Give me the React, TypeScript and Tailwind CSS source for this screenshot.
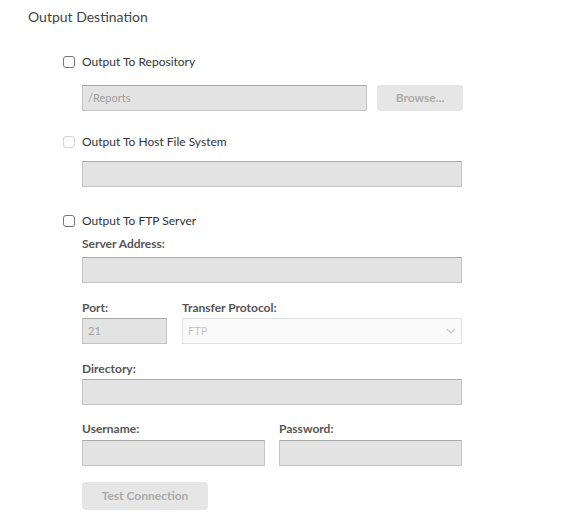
import React from "react";

const font = { fontFamily: "Lato, 'Liberation Sans', sans-serif" };

function Check({ label, disabled }: { label: string; disabled?: boolean }) {
  return (
    <label className="flex items-center h-[20px] ml-[35px] gap-[7px]">
      <span
        className={
          "w-[12px] h-[12px] rounded-[3px] border bg-white " +
          (disabled ? "border-[#d4d4d4]" : "border-[#767676]")
        }
      />
      <span className="text-[12px] text-[#333]">{label}</span>
    </label>
  );
}

function Field({ w, value }: { w: string; value?: string }) {
  return (
    <div
      className={
        w +
        " h-[26px] bg-[#e3e3e3] border border-[#c4c4c4] border-t-[#a9a9a9] flex items-center px-[5px] text-[11px] text-[#a0a0a0]"
      }
    >
      {value}
    </div>
  );
}

function Label({ children }: { children: React.ReactNode }) {
  return <div className="text-[12px] font-bold text-[#555] leading-[16px]">{children}</div>;
}

export default function App() {
  return (
    <div className="w-[562px] h-[524px] bg-white pl-[28px] pt-[7px]" style={font}>
      <div className="text-[14px] leading-[20px] text-[#444]">Output Destination</div>

      <div className="mt-[25px]">
        <Check label="Output To Repository" />
      </div>
      <div className="ml-[54px] mt-[13px] flex gap-[10px]">
        <Field w="w-[285px]" value="/Reports" />
        <button className="w-[86px] h-[26px] rounded-[3px] bg-[#e6e6e6] text-[12px] font-bold text-[#ababab]">
          Browse...
        </button>
      </div>

      <div className="mt-[21px]">
        <Check label="Output To Host File System" disabled />
      </div>
      <div className="ml-[54px] mt-[9px]">
        <Field w="w-[380px]" />
      </div>

      <div className="mt-[24px]">
        <Check label="Output To FTP Server" />
      </div>

      <div className="ml-[54px] w-[380px] flex flex-col">
        <div className="mt-[5px]">
          <Label>Server Address:</Label>
        </div>
        <div className="mt-[5px]">
          <Field w="w-[380px]" />
        </div>

        <div className="mt-[17px] flex gap-[15px]">
          <div className="flex flex-col w-[85px]">
            <Label>Port:</Label>
            <div className="mt-[2px]">
              <Field w="w-[85px]" value="21" />
            </div>
          </div>
          <div className="flex flex-col flex-1">
            <Label>Transfer Protocol:</Label>
            <div className="mt-[2px] h-[26px] border border-[#e2e2e2] bg-[#fafafa] flex items-center justify-between px-[5px] text-[11px] text-[#c8c8c8]">
              <span>FTP</span>
              <svg width="10" height="6" viewBox="0 0 10 6" fill="none">
                <path d="M1 1l4 4 4-4" stroke="#c8c8c8" strokeWidth="1.2" />
              </svg>
            </div>
          </div>
        </div>

        <div className="mt-[17px]">
          <Label>Directory:</Label>
        </div>
        <div className="mt-[2px]">
          <Field w="w-[380px]" />
        </div>

        <div className="mt-[16px] flex gap-[14px]">
          <div className="flex flex-col w-[183px]">
            <Label>Username:</Label>
            <div className="mt-[3px]">
              <Field w="w-[183px]" />
            </div>
          </div>
          <div className="flex flex-col w-[183px]">
            <Label>Password:</Label>
            <div className="mt-[3px]">
              <Field w="w-[183px]" />
            </div>
          </div>
        </div>

        <button className="mt-[16px] w-[126px] h-[28px] rounded-[4px] bg-[#e6e6e6] text-[12px] font-bold text-[#ababab]">
          Test Connection
        </button>
      </div>
    </div>
  );
}
